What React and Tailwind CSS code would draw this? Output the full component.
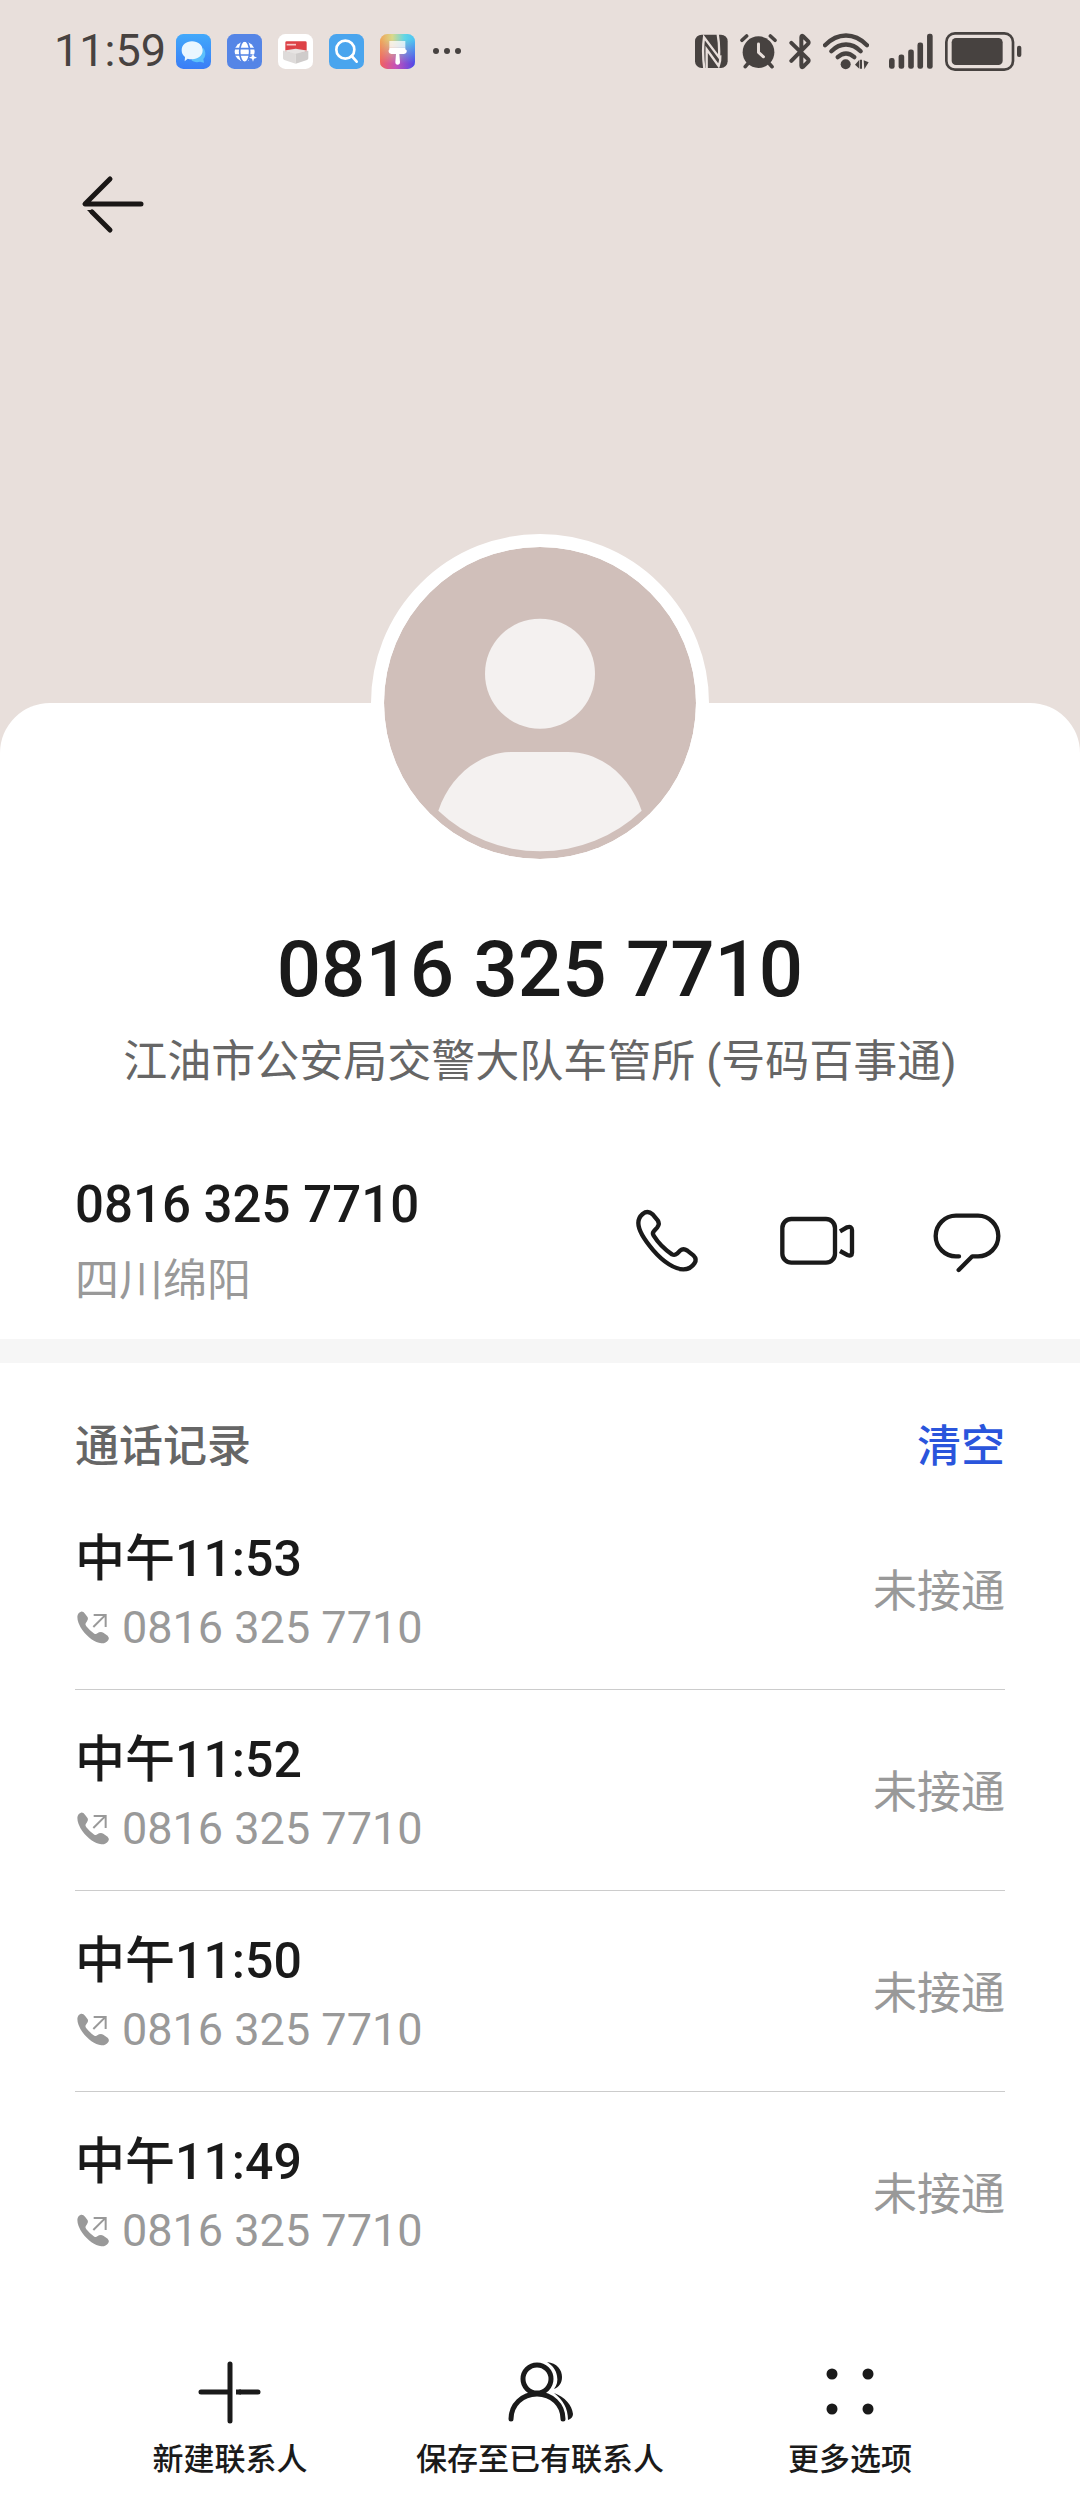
// src/pages/ContactDetail.jsx
import React from "react";

const PHONE = "0816 325 7710";

const callLogs = [
  { id: 1, time: "中午11:53", status: "未接通" },
  { id: 2, time: "中午11:52", status: "未接通" },
  { id: 3, time: "中午11:50", status: "未接通" },
  { id: 4, time: "中午11:49", status: "未接通" },
];

/* ---------- Status bar: notification icons ---------- */

const MessagesAppIcon = () => (
  <svg viewBox="0 0 105 105" className="size-[35px]" aria-hidden="true">
    <defs>
      <linearGradient id="msgBg" x1="0" y1="0" x2="0" y2="1">
        <stop offset="0" stopColor="#42a9fb" />
        <stop offset="1" stopColor="#3a7df6" />
      </linearGradient>
    </defs>
    <rect width="105" height="105" rx="22" fill="url(#msgBg)" />
    <path d="M82 42c8 10 8 26 0 33l2 11-12-3c-10 3-20 1-26-5z" fill="#5cc0fb" />
    <path
      d="M48 22c18 0 32 11 32 27S66 76 48 76c-5 0-9-1-13-2l-9 8 1-13c-7-5-10-12-10-20 0-16 13-27 31-27z"
      fill="#e9f6ff"
    />
  </svg>
);

const BrowserAppIcon = () => (
  <svg viewBox="0 0 105 105" className="size-[35px]" aria-hidden="true">
    <rect width="105" height="105" rx="22" fill="#5585e6" />
    <circle cx="53" cy="53" r="30" fill="#fff" />
    <g fill="none" stroke="#5585e6" strokeWidth="5">
      <path d="M20 44h66M20 63h66" />
      <ellipse cx="53" cy="53" rx="15" ry="33" />
    </g>
    <path d="M66 66h26v22H66z" fill="#5585e6" />
    <path d="M78 58l3 9 9 4-9 3-3 9-3-9-9-3 9-4z" fill="#fff" />
  </svg>
);

const BoxAppIcon = () => (
  <svg viewBox="0 0 105 105" className="size-[35px]" aria-hidden="true">
    <rect width="105" height="105" rx="22" fill="#fff" />
    <path d="M22 26q0-4 4-4h56q4 0 4 4v30H22z" fill="#dd4146" />
    <path d="M26 32h28" stroke="#f6c9c9" strokeWidth="5" />
    <path d="M15 50l38-6 38 6-38 12z" fill="#e7e4e3" />
    <path d="M15 50l38 9v30l-34-11q-4-1-4-5z" fill="#dedbda" />
    <path d="M91 50l-38 9v30l34-11q4-1 4-5z" fill="#cfcccb" />
  </svg>
);

const SearchAppIcon = () => (
  <svg viewBox="0 0 105 105" className="size-[35px]" aria-hidden="true">
    <rect width="105" height="105" rx="22" fill="#4aa5ee" />
    <circle cx="49" cy="47" r="27" fill="none" stroke="#fff" strokeWidth="8" />
    <path d="M68 66l15 17" stroke="#fff" strokeWidth="8" strokeLinecap="round" />
  </svg>
);

const ThemeAppIcon = () => (
  <svg viewBox="0 0 105 105" className="size-[35px]" aria-hidden="true">
    <defs>
      <linearGradient id="themeTop" x1="0" y1="0" x2="1" y2="0">
        <stop offset="0" stopColor="#f0a458" />
        <stop offset="0.35" stopColor="#d9d98a" />
        <stop offset="0.7" stopColor="#62d6e6" />
        <stop offset="1" stopColor="#4cc3f4" />
      </linearGradient>
      <linearGradient id="themeBottom" x1="0" y1="0" x2="1" y2="0">
        <stop offset="0" stopColor="#f2605e" />
        <stop offset="0.45" stopColor="#c552b8" />
        <stop offset="1" stopColor="#5046e8" />
      </linearGradient>
      <linearGradient id="themeFade" x1="0" y1="0" x2="0" y2="1">
        <stop offset="0.15" stopColor="#fff" stopOpacity="0" />
        <stop offset="0.85" stopColor="#fff" />
      </linearGradient>
      <mask id="themeMask">
        <rect width="105" height="105" fill="url(#themeFade)" />
      </mask>
    </defs>
    <rect width="105" height="105" rx="22" fill="url(#themeTop)" />
    <rect width="105" height="105" rx="22" fill="url(#themeBottom)" mask="url(#themeMask)" />
    <path d="M28 21h48v20H28z" fill="#fff" fillOpacity="0.75" />
    <path
      d="M28 41h48v5q6 2 4 8-1 5-8 6H58l2 24q0 8-7 8t-7-8l2-24H34q-7-1-8-6-1-6 2-8z"
      fill="#fff"
    />
  </svg>
);

/* ---------- Status bar: system icons ---------- */

const NfcIcon = () => (
  <svg viewBox="39 42 99 105" className="h-[35px] w-[33px]" aria-hidden="true">
    <rect x="39" y="44" width="98" height="100" rx="20" fill="#474240" />
    <g fill="none" stroke="#e8dfdb" strokeWidth="7">
      <path d="M67 146Q60 95 66 52L111 112Q113 75 107 42" />
      <path d="M74 146V88L110 138Q116 122 115 106" />
    </g>
  </svg>
);

const AlarmIcon = () => (
  <svg viewBox="175 40 112 110" className="h-[37px] w-[37px]" aria-hidden="true">
    <circle cx="231" cy="97" r="48" fill="#474240" />
    <g fill="none" stroke="#474240" strokeWidth="11" strokeLinecap="round">
      <path d="M181 61l14-13M281 61l-14-13M200 130l-9 11M262 130l10 11" />
    </g>
    <path
      d="M231 72v26l15 13"
      fill="none"
      stroke="#e8dfdb"
      strokeWidth="9"
      strokeLinecap="round"
      strokeLinejoin="round"
    />
  </svg>
);

const BluetoothIcon = () => (
  <svg viewBox="325 40 66 110" className="h-[37px] w-[22px]" aria-hidden="true">
    <path
      d="M332 69l50 49q4 4 0 8l-15 15q-5 3-5-3V52q0-6 5-3l15 15q4 4 0 8l-50 51"
      fill="none"
      stroke="#474240"
      strokeWidth="12"
      strokeLinecap="round"
      strokeLinejoin="round"
    />
  </svg>
);

const WifiIcon = () => (
  <svg viewBox="429 40 138 110" className="h-[37px] w-[46px]" aria-hidden="true">
    <g fill="none" stroke="#474240" strokeWidth="13" strokeLinecap="round">
      <path d="M435 76q29-29 63-29t63 29" />
      <path d="M454 94q20-20 44-20t44 20" />
      <path d="M473 112q25-22 50 0" />
    </g>
    <circle cx="497" cy="133" r="15" fill="#474240" />
    <path d="M538 120v27l-13-12zM540 120h6v27h-6zM551 121l15 6-13 21z" fill="#474240" />
  </svg>
);

const SignalIcon = () => (
  <svg viewBox="626 40 133 110" className="ml-2 h-[37px] w-[44px]" aria-hidden="true">
    <g fill="#474240">
      <rect x="626" y="115" width="17" height="32" rx="7" />
      <rect x="655" y="104" width="17" height="43" rx="7" />
      <rect x="684" y="89" width="17" height="58" rx="7" />
      <rect x="712" y="68" width="17" height="79" rx="7" />
      <rect x="741" y="41" width="17" height="106" rx="7" />
    </g>
  </svg>
);

const BatteryIcon = () => (
  <svg viewBox="795 36 231 117" className="h-[39px] w-[77px]" aria-hidden="true">
    <rect
      x="799"
      y="40"
      width="200"
      height="109"
      rx="26"
      fill="none"
      stroke="#474240"
      strokeWidth="8"
    />
    <rect x="815" y="54" width="153" height="81" rx="13" fill="#474240" />
    <rect x="1011" y="77" width="13" height="34" rx="6" fill="#474240" />
  </svg>
);

const StatusBar = () => (
  <div className="flex h-[102px] items-center justify-between pl-[54px] pr-[58px] text-[#474240]">
    <div className="flex items-center gap-4">
      <span className="-mr-1.5 text-[45px] leading-[48px]">11:59</span>
      <MessagesAppIcon />
      <BrowserAppIcon />
      <BoxAppIcon />
      <SearchAppIcon />
      <ThemeAppIcon />
      <svg viewBox="0 0 32 8" className="h-2 w-8" aria-hidden="true">
        <circle cx="5" cy="4" r="3" fill="#474240" />
        <circle cx="16" cy="4" r="3" fill="#474240" />
        <circle cx="27" cy="4" r="3" fill="#474240" />
      </svg>
    </div>
    <div className="flex items-center gap-3">
      <NfcIcon />
      <AlarmIcon />
      <BluetoothIcon />
      <WifiIcon />
      <SignalIcon />
      <BatteryIcon />
    </div>
  </div>
);

/* ---------- Contact ---------- */

const BackIcon = () => (
  <svg viewBox="0 0 72 72" className="size-[72px]" aria-hidden="true">
    <g fill="none" stroke="#1a1716" strokeWidth="5" strokeLinecap="round" strokeLinejoin="round">
      <path d="M35 11L10 36h56" />
      <path d="M17 44l18 18" />
    </g>
    <path d="M12 42h6l3 4h-5z" fill="#1a1716" />
  </svg>
);

const Avatar = () => (
  <svg
    viewBox="132 111 936 936"
    className="size-[338px] rounded-full border-[13px] border-white bg-white"
    role="img"
    aria-label="头像"
  >
    <circle cx="600" cy="579" r="468" fill="#d0bfba" />
    <circle cx="600" cy="491" r="165" fill="#f4f1f0" />
    <path
      d="M295 902C330 797 420 726 517 726H684C782 726 870 797 905 902A442 442 0 0 1 295 902Z"
      fill="#f4f1f0"
    />
  </svg>
);

const CallIcon = () => (
  <svg viewBox="87 63 228 228" className="size-[76px]" aria-hidden="true">
    <path
      d="M158 97L173 115Q180 125 172 136L162 147Q156 153 161 161C176 185 195 203 216 217Q224 221 231 215L240 206Q250 198 262 206L281 221Q291 231 284 243Q272 262 250 262C225 262 190 240 160 205C130 170 115 145 115 123Q115 107 128 96Q143 84 158 97Z"
      fill="none"
      stroke="#1a1a1a"
      strokeWidth="13"
      strokeLinejoin="round"
    />
  </svg>
);

const VideoIcon = () => (
  <svg viewBox="537 63 228 228" className="size-[76px]" aria-hidden="true">
    <g fill="none" stroke="#1a1a1a" strokeWidth="13">
      <rect x="547" y="111" width="158" height="131" rx="27" />
      <path d="M720 148l21-12q15-5 15 9v67q0 12-14 7l-22-12" />
    </g>
  </svg>
);

const MessageIcon = () => (
  <svg viewBox="987 63 228 228" className="size-[76px]" aria-hidden="true">
    <path
      d="M1077 223H1068A61 61 0 0 1 1068 101H1134A61 61 0 0 1 1134 223H1117L1076 264"
      fill="none"
      stroke="#1a1a1a"
      strokeWidth="13"
      strokeLinecap="round"
      strokeLinejoin="round"
    />
  </svg>
);

const OutgoingIcon = () => (
  <svg viewBox="48 862 108 108" className="size-9 shrink-0" aria-hidden="true">
    <path
      d="M55 882Q56 870 66 867Q73 866 78 873L86 884Q89 890 84 896L80 902Q78 906 82 911Q92 924 106 933Q111 936 115 932L120 929Q127 926 133 930L146 939Q152 945 148 952Q140 963 127 962C108 960 86 944 70 922Q55 900 55 882Z"
      fill="#999"
    />
    <path d="M103 913l35-35M104 877h36v36" fill="none" stroke="#999" strokeWidth="6" />
  </svg>
);

const CallLogItem = ({ log }) => (
  <li className="flex items-center justify-between border-b border-[#cccccc] pb-7 pt-[34px] last:border-b-0">
    <div>
      <p className="text-[50px] font-medium leading-[72px] text-[#1a1a1a]">{log.time}</p>
      <p className="flex items-center gap-[11px] text-[45px] leading-[66px] text-[#999999]">
        <OutgoingIcon />
        {PHONE}
      </p>
    </div>
    <span className="text-[44px] leading-[64px] text-[#999999]">{log.status}</span>
  </li>
);

/* ---------- Bottom bar ---------- */

const AddIcon = () => (
  <svg viewBox="0 0 72 72" className="size-[72px]" aria-hidden="true">
    <g fill="none" stroke="#1a1a1a" strokeWidth="5" strokeLinecap="round">
      <path d="M36 8v57M7 36h29M64 36H46" />
      <path d="M42 36h5" strokeLinecap="butt" />
    </g>
  </svg>
);

const PeopleIcon = () => (
  <svg viewBox="0 0 72 72" className="size-[72px]" aria-hidden="true">
    <g fill="none" stroke="#1a1a1a" strokeWidth="5" strokeLinecap="round">
      <ellipse cx="33" cy="23" rx="14" ry="14" />
      <path d="M7 63C7 49 18 38 33 38S59 49 59 63" />
    </g>
    <path d="M43 6C53 7 58 14 58 21C58 27 55 31 50 33C53 29 54 25 53 20C52 14 49 10 43 6Z" fill="#1a1a1a" />
    <path d="M50 37C61 41 68 49 69 58C69 61 67 63 64 64C64 52 59 44 50 37Z" fill="#1a1a1a" />
  </svg>
);

const MoreIcon = () => (
  <svg viewBox="0 0 72 72" className="size-[72px]" aria-hidden="true">
    <g fill="#1a1a1a">
      <circle cx="18" cy="18" r="5.500" />
      <circle cx="54" cy="18" r="5.500" />
      <circle cx="18" cy="53" r="5.500" />
      <circle cx="54" cy="53" r="5.500" />
    </g>
  </svg>
);

const bottomActions = [
  { label: "新建联系人", Icon: AddIcon },
  { label: "保存至已有联系人", Icon: PeopleIcon },
  { label: "更多选项", Icon: MoreIcon },
];

const App = () => {
  return (
    <div
      lang="zh-CN"
      className="min-h-screen bg-[#e8dfdb] font-['Roboto','Noto_Sans_CJK_SC',sans-serif] text-[#1a1a1a]"
    >
      <header className="pb-[463px]">
        <StatusBar />
        <div className="px-[75px] pt-[66px]">
          <button type="button" aria-label="返回" className="block">
            <BackIcon />
          </button>
        </div>
      </header>

      <main className="rounded-t-[50px] bg-white">
        {/* Profile */}
        <section className="flex flex-col items-center text-center">
          <div className="-mt-[169px]">
            <Avatar />
          </div>
          <h1 className="mt-[50px] text-[78px] font-medium leading-[96px]">{PHONE}</h1>
          <p className="mt-3 text-[44px] leading-[64px] text-[#666666]">
            江油市公安局交警大队车管所 (号码百事通)
          </p>
        </section>

        {/* Number and actions */}
        <section className="flex items-center justify-between px-[75px] pb-[26px] pt-[75px]">
          <div>
            <p className="text-[51px] font-medium leading-[72px]">{PHONE}</p>
            <p className="mt-2 text-[44px] leading-[64px] text-[#999999]">四川绵阳</p>
          </div>
          <div className="flex gap-[74px]">
            <button type="button" aria-label="拨打电话">
              <CallIcon />
            </button>
            <button type="button" aria-label="视频通话">
              <VideoIcon />
            </button>
            <button type="button" aria-label="发送信息">
              <MessageIcon />
            </button>
          </div>
        </section>

        <div className="h-6 bg-[#f6f6f6]" />

        {/* Call history */}
        <section className="px-[75px] pt-[52px]">
          <div className="flex items-center justify-between pb-[10px] text-[44px] font-medium leading-[64px]">
            <h2 className="text-[#666666]">通话记录</h2>
            <button type="button" className="text-[#2a55dc]">
              清空
            </button>
          </div>
          <ul>
            {callLogs.map((log) => (
              <CallLogItem key={log.id} log={log} />
            ))}
          </ul>
        </section>

        <nav className="grid grid-cols-3 px-[75px] pb-5 pt-16">
          {bottomActions.map(({ label, Icon }) => (
            <button
              key={label}
              type="button"
              className="flex flex-col items-center gap-2 whitespace-nowrap text-[31px] font-medium leading-[48px]"
            >
              <Icon />
              {label}
            </button>
          ))}
        </nav>
      </main>
    </div>
  );
};

export default App;
